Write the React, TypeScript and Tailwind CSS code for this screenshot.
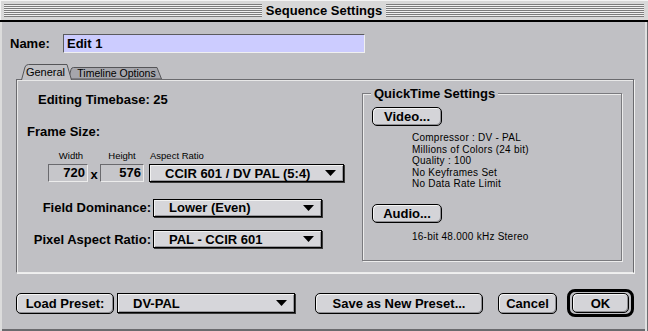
import React from "react";

function Arrow() {
  return (
    <svg width="11" height="6" viewBox="0 0 11 6" className="shrink-0">
      <path d="M0 0 L11 0 L5.5 6 Z" fill="#000" />
    </svg>
  );
}

function Popup({ label, className }: { label: string; className: string }) {
  return (
    <div
      className={
        "flex items-center justify-between pl-[15px] pr-[7px] border border-black bg-[#d6d6da] shadow-[1px_1px_0_#3a3a3a,inset_1px_1px_0_#f2f2f2,inset_-1px_-1px_0_#9a9a9e] text-[13px] font-bold leading-none " +
        className
      }
    >
      <span>{label}</span>
      <Arrow />
    </div>
  );
}

function Btn({ label, className }: { label: string; className: string }) {
  return (
    <div
      className={
        "flex items-center justify-center rounded-[5px] border border-black bg-[#d4d4d8] shadow-[inset_1px_1px_0_#f4f4f4,inset_-1px_-1px_0_#8e8e92] text-[13px] font-bold leading-none " +
        className
      }
    >
      {label}
    </div>
  );
}

const stripes =
  "bg-[repeating-linear-gradient(to_bottom,#7c7c7c_0px,#7c7c7c_1px,#f0f0f0_1px,#f0f0f0_2px)]";

export default function App() {
  return (
    <div className="w-[648px] h-[331px] flex flex-col bg-[#c0c0c4] text-black font-['Liberation_Sans',Arial,sans-serif] overflow-hidden">
      {/* Title bar */}
      <div className="h-[20px] shrink-0 bg-[#d8d8d8] flex items-center px-[4px] shadow-[inset_1px_1px_0_#f4f4f4]">
        <div className={"flex-1 h-[13px] " + stripes} />
        <div className="px-[4px] text-[13px] font-bold leading-none">Sequence Settings</div>
        <div className={"flex-1 h-[13px] " + stripes} />
      </div>
      <div className="h-[2px] shrink-0 bg-black" />

      {/* Body */}
      <div className="flex-1 flex flex-col shadow-[inset_2px_0_0_#dcdcdc,inset_-1px_0_0_#6e6e72,inset_-3px_0_0_#e0e0e0,inset_0_-2px_0_#6a6a6e]">
        {/* Name row */}
        <div className="mt-[12px] pl-[10px] flex items-center h-[19px]">
          <div className="w-[53px] text-[13px] font-bold">Name:</div>
          <div className="w-[302px] h-[19px] bg-[#ccccff] border-t border-l border-[#5a5a5e] border-b border-r border-b-[#f0f0f0] border-r-[#f0f0f0] flex items-center pl-[3px] text-[13px] font-bold">
            Edit 1
          </div>
        </div>

        {/* Tabs */}
        <div className="mt-[11px] ml-[16px] h-[15px] flex items-end relative z-10">
          <div className="relative ml-[5px] w-[51px] h-[16px] -mb-[1px] z-10 flex items-center justify-center">
            <svg className="absolute inset-0" width="51" height="16" viewBox="0 0 51 16">
              <path d="M0.5 16 L4 3 Q5 0.5 7.5 0.5 L46 0.5 L50.5 16" fill="#c0c0c4" stroke="#555558" />
            </svg>
            <span className="relative text-[11px] leading-none pr-[2px]">General</span>
          </div>
          <div className="relative -ml-[4px] w-[94px] h-[12px] flex items-center justify-center">
            <svg className="absolute inset-0" width="94" height="12" viewBox="0 0 94 12">
              <path d="M0.5 12 L3 2.5 Q3.6 0.5 5.5 0.5 L89 0.5 L93.5 12 Z" fill="#a6a6ac" stroke="#555558" />
            </svg>
            <span className="relative text-[10.5px] leading-none pl-[3px]">Timeline Options</span>
          </div>
        </div>

        {/* Tab panel */}
        <div className="ml-[16px] w-[618px] h-[194px] flex border-t border-t-[#6a6a6e] border-l border-l-[#6a6a6e] border-r border-r-[#6a6a6e] border-b border-b-[#ececec] shadow-[inset_1px_1px_0_#e8e8e8,1px_1px_0_#f0f0f0]">
          {/* Left column */}
          <div className="flex flex-col">
            <div className="mt-[12px] ml-[21px] h-[16px] leading-[16px] text-[13px] font-bold">
              Editing Timebase: 25
            </div>
            <div className="mt-[16px] ml-[10px] h-[16px] leading-[16px] text-[13px] font-bold">
              Frame Size:
            </div>
            <div className="mt-[11px] ml-[31px] flex">
              <div className="w-[40px] flex flex-col items-center">
                <div className="h-[10px] text-[9.5px] leading-[10px] pl-[6px]">Width</div>
                <div className="mt-[3px] w-[40px] h-[18px] border-t border-l border-[#6a6a6e] border-b border-r border-b-[#ececec] border-r-[#ececec] bg-[#c6c6ca] flex items-center justify-end pr-[2px] text-[13px] font-bold">
                  720
                </div>
              </div>
              <div className="w-[12px] flex flex-col items-center">
                <div className="h-[10px]" />
                <div className="mt-[3px] h-[18px] flex items-end text-[13px] font-bold leading-[14px]">x</div>
              </div>
              <div className="w-[44px] flex flex-col items-center">
                <div className="h-[10px] text-[9.5px] leading-[10px]">Height</div>
                <div className="mt-[3px] w-[44px] h-[18px] border-t border-l border-[#6a6a6e] border-b border-r border-b-[#ececec] border-r-[#ececec] bg-[#c6c6ca] flex items-center justify-end pr-[2px] text-[13px] font-bold">
                  576
                </div>
              </div>
              <div className="ml-[5px] w-[196px] flex flex-col">
                <div className="h-[10px] text-[9.5px] leading-[10px] pl-[1px]">Aspect Ratio</div>
                <Popup label="CCIR 601 / DV PAL (5:4)" className="mt-[3px] w-[195px] h-[18px]" />
              </div>
            </div>
            <div className="mt-[16px] flex items-center">
              <div className="w-[136px] text-right pr-[2px] text-[13px] font-bold">Field Dominance:</div>
              <Popup label="Lower (Even)" className="w-[169px] h-[18px]" />
            </div>
            <div className="mt-[12px] flex items-center">
              <div className="w-[136px] text-right pr-[2px] text-[13px] font-bold">Pixel Aspect Ratio:</div>
              <Popup label="PAL - CCIR 601" className="w-[169px] h-[18px]" />
            </div>
          </div>

          {/* QuickTime group */}
          <div className="ml-auto mr-[11px] mt-[13px] w-[260px] h-[168px] relative border border-[#7a7a7e] shadow-[inset_1px_1px_0_#ececec,1px_1px_0_#ececec] flex flex-col">
            <div className="absolute left-[8px] -top-[8px] px-[3px] bg-[#c0c0c4] text-[13px] font-bold leading-[15px]">
              QuickTime Settings
            </div>
            <Btn label="Video..." className="mt-[13px] ml-[9px] w-[70px] h-[19px]" />
            <div className="mt-[6px] ml-[49px] flex flex-col text-[10px] tracking-[0.25px] leading-[11.5px]">
              <div>Compressor : DV - PAL</div>
              <div>Millions of Colors (24 bit)</div>
              <div>Quality : 100</div>
              <div>No Keyframes Set</div>
              <div>No Data Rate Limit</div>
            </div>
            <Btn label="Audio..." className="mt-[14px] ml-[9px] w-[70px] h-[19px]" />
            <div className="mt-[8px] ml-[49px] text-[10px] tracking-[0.25px] leading-[11.5px]">
              16-bit 48.000 kHz Stereo
            </div>
          </div>
        </div>

        {/* Bottom buttons */}
        <div className="mt-[16px] ml-[16px] flex items-center h-[28px]">
          <Btn label="Load Preset:" className="w-[98px] h-[21px]" />
          <Popup label="DV-PAL" className="ml-[3px] w-[178px] h-[20px]" />
          <Btn label="Save as New Preset..." className="ml-[20px] w-[168px] h-[21px]" />
          <Btn label="Cancel" className="ml-[15px] w-[59px] h-[21px]" />
          <div className="ml-[10px] w-[67px] h-[28px] rounded-[8px] border-[3px] border-black flex items-center justify-center">
            <Btn label="OK" className="w-[57px] h-[20px]" />
          </div>
        </div>
      </div>
    </div>
  );
}
